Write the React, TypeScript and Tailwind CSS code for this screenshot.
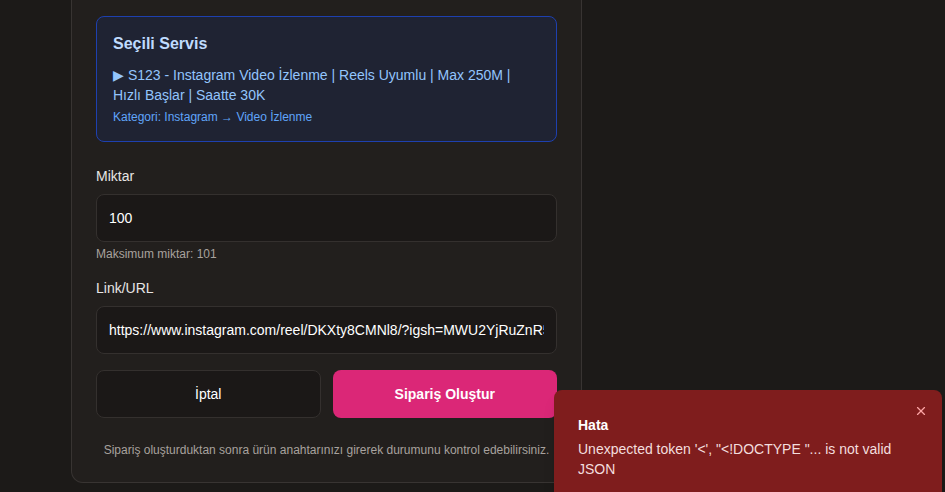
import { X } from "lucide-react";

export default function App() {
  return (
    <div className="relative h-[492px] overflow-hidden bg-[#1c1a18] font-['Liberation_Sans',Arial,sans-serif]">
      {/* Order card (top is scrolled out of view) */}
      <div className="ml-[71px] w-[511px] rounded-b-xl border border-t-0 border-[#383432] bg-[#221f1d] px-6 pb-6 pt-4">
        {/* Selected service */}
        <div className="rounded-lg border border-[#1e40af] bg-[#1f2333] px-4 pb-4 pt-[15px]">
          <h3 className="text-base leading-6 font-bold text-[#bfdbfe]">Seçili Servis</h3>
          <p className="mt-[9px] text-sm leading-5 text-[#93c5fd]">
            ▶ S123 - Instagram Video İzlenme | Reels Uyumlu | Max 250M | Hızlı Başlar | Saatte 30K
          </p>
          <p className="mt-1 text-xs leading-4 text-[#60a5fa]">Kategori: Instagram → Video İzlenme</p>
        </div>

        {/* Amount */}
        <div className="mt-6">
          <label className="block text-sm leading-5 text-[#e7e5e4]">Miktar</label>
          <div className="mt-2 flex h-12 items-center rounded-lg border border-[#34302e] bg-[#1b1817] px-3 text-sm text-white">
            100
          </div>
          <p className="mt-1 text-xs leading-4 text-[#a8a29e]">Maksimum miktar: 101</p>
        </div>

        {/* Link */}
        <div className="mt-4">
          <label className="block text-sm leading-5 text-[#e7e5e4]">Link/URL</label>
          <div className="mt-2 flex h-12 items-center overflow-hidden whitespace-nowrap rounded-lg border border-[#34302e] bg-[#1b1817] px-3 text-sm text-white">
            <span className="block w-full overflow-hidden">https://www.instagram.com/reel/DKXty8CMNl8/?igsh=MWU2YjRuZnR5cWx2</span>
          </div>
        </div>

        {/* Actions */}
        <div className="mt-4 grid grid-cols-2 gap-3">
          <button className="h-12 rounded-lg border border-[#34302e] bg-[#1b1817] text-sm text-white">İptal</button>
          <button className="h-12 rounded-lg bg-[#db2777] text-sm font-bold text-white">Sipariş Oluştur</button>
        </div>

        <p className="mt-6 text-center text-xs leading-4 text-[#a8a29e]">
          Sipariş oluşturduktan sonra ürün anahtarınızı girerek durumunu kontrol edebilirsiniz.
        </p>
      </div>

      {/* Error toast */}
      <div className="absolute left-[554px] top-[390px] h-[120px] w-[388px] rounded-lg bg-[#7f1d1d] px-6 pt-[25px] shadow-lg">
        <button className="absolute right-[14px] top-[14px] text-[#fca5a5]">
          <X size={14} strokeWidth={2} />
        </button>
        <div className="text-sm leading-5 font-bold text-white">Hata</div>
        <div className="mt-1 pr-6 text-sm leading-5 text-[#f3dede]">
          Unexpected token '&lt;', "&lt;!DOCTYPE "... is not valid JSON
        </div>
      </div>
    </div>
  );
}
